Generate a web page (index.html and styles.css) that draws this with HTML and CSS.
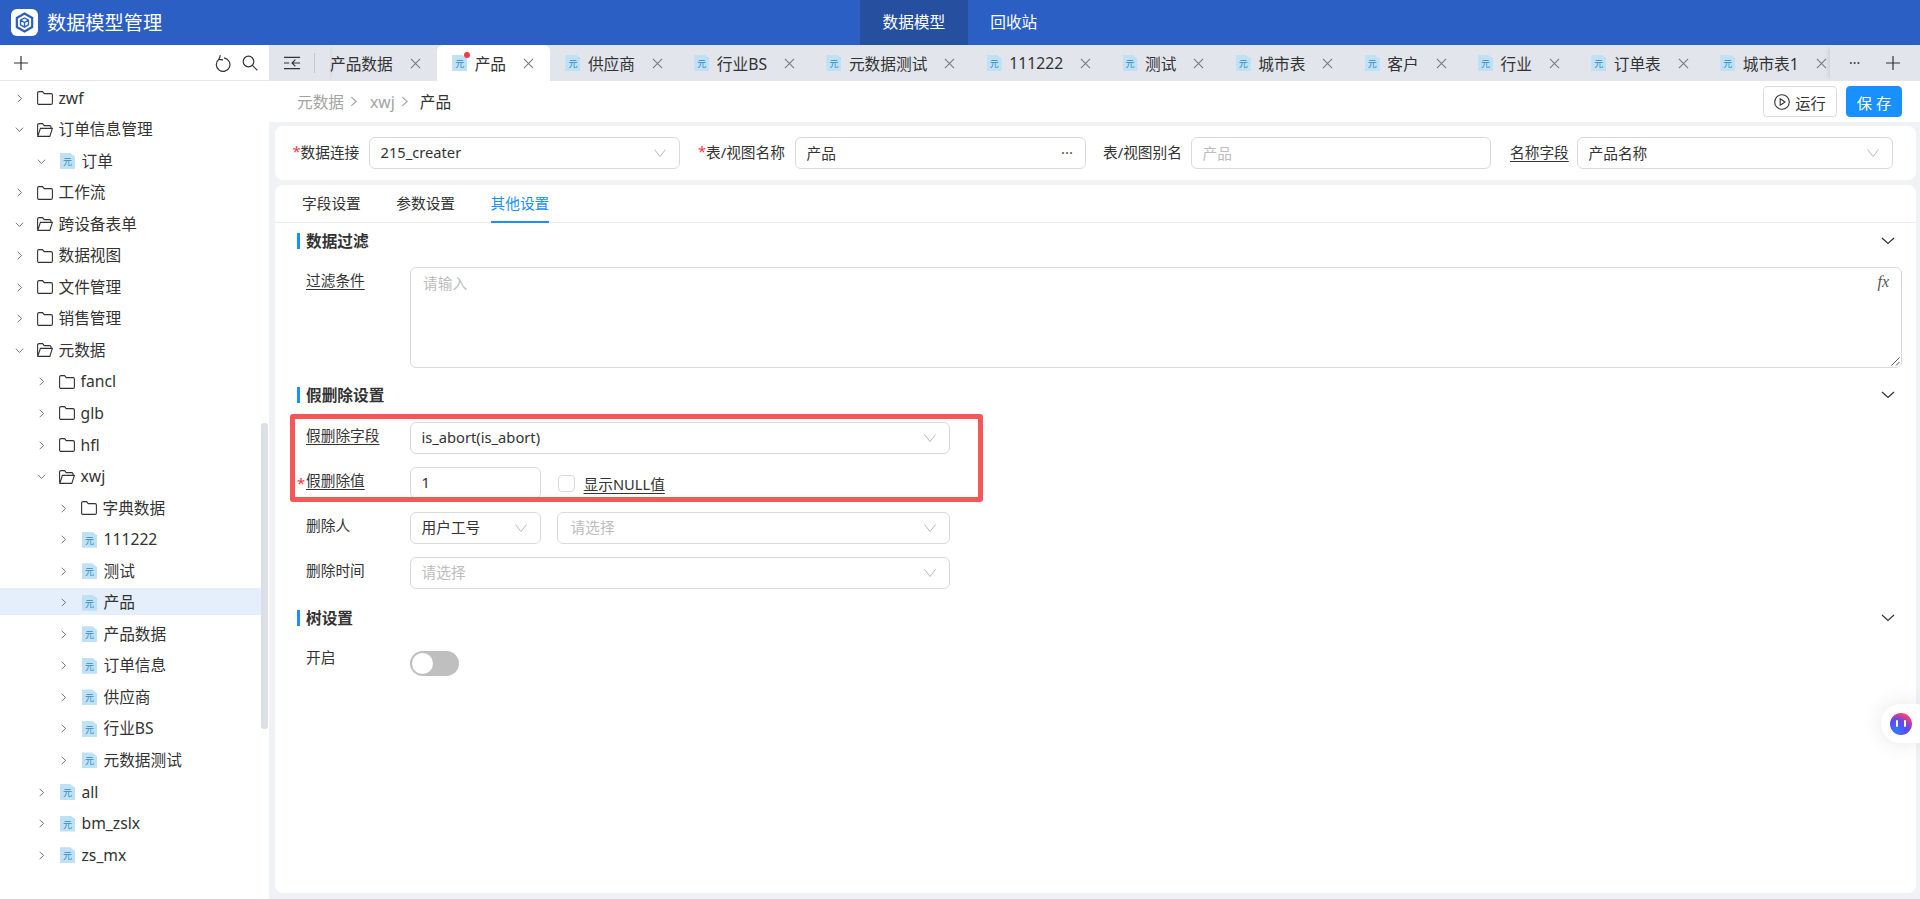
FILE: index.html
```html
<!DOCTYPE html>
<html lang="zh-CN">
<head>
<meta charset="utf-8">
<title>数据模型管理</title>
<link rel="stylesheet" href="styles.css">
</head>
<body>
<svg class="defs" aria-hidden="true">
  <symbol id="i-chev-r" viewBox="0 0 10 10"><path d="M3 1l4.400 4L3 9" fill="none" stroke="currentColor" stroke-width="1"/></symbol>
  <symbol id="i-chev-d" viewBox="0 0 14 14"><path d="M1.500 3.500L7 10.500l5.500-7" fill="none" stroke="currentColor" stroke-width="1"/></symbol>
  <symbol id="i-chev-open" viewBox="0 0 10 10"><path d="M1 3l4 4.200L9 3" fill="none" stroke="currentColor" stroke-width="1"/></symbol>
  <symbol id="i-chev-sec" viewBox="0 0 14 10"><path d="M1 2l6 5.500L13 2" fill="none" stroke="currentColor" stroke-width="1.200"/></symbol>
  <symbol id="i-folder" viewBox="0 0 16 14"><path d="M.6 12V2A1.400 1.400 0 0 1 2 .6h3.600l1.600 2H14A1.400 1.400 0 0 1 15.400 4v8a1.400 1.400 0 0 1-1.400 1.400H2A1.400 1.400 0 0 1 .6 12z" fill="none" stroke="#333" stroke-width="1.100"/></symbol>
  <symbol id="i-folder-open" viewBox="0 0 16 14"><path d="M.6 12.600V2A1.400 1.400 0 0 1 2 .6h3.600l1.600 2H12.600A1.400 1.400 0 0 1 14 4v1.400M.8 13.400H12.800L15.400 5.400H3.400L.8 13.400z" fill="none" stroke="#333" stroke-width="1.100"/></symbol>
  <symbol id="i-close" viewBox="0 0 12 12"><path d="M1 1l10 10M11 1L1 11" fill="none" stroke="currentColor" stroke-width="1.100"/></symbol>
</svg>

<header class="topbar">
  <div class="brand">
    <span class="logo">
      <svg viewBox="0 0 20 20" width="21" height="21"><path d="M10 1.500l7.300 4.200v8.600L10 18.500l-7.300-4.200V5.700z" fill="none" stroke="#2c5fc3" stroke-width="2.100"/><path d="M6.200 7.800L10 5.700l3.800 2.100v4.400L10 14.400l-3.800-2.200zM6.200 7.800L10 10l3.800-2.200M10 10v4.400" fill="none" stroke="#2c5fc3" stroke-width="1.300"/></svg>
    </span>
    <span class="brand-name">数据模型管理</span>
  </div>
  <nav class="topnav">
    <a class="topnav-item is-active">数据模型</a>
    <a class="topnav-item">回收站</a>
  </nav>
</header>

<div class="layout">
  <aside class="sidebar">
    <div class="side-tools">
      <svg class="plus" viewBox="0 0 14 14" width="14" height="14"><path d="M7 0v14M0 7h14" stroke="#333" stroke-width="1.200"/></svg>
      <span class="side-tools-right">
        <svg viewBox="0 0 16 18" width="16" height="18"><path d="M3.900 5.300A6.800 6.800 0 1 0 9 3.900" fill="none" stroke="#333" stroke-width="1.200"/><path d="M5.400 1.200L3.900 5.400l4.200.4" fill="none" stroke="#333" stroke-width="1.200"/></svg>
        <svg viewBox="0 0 16 16" width="16" height="16"><circle cx="6.500" cy="6.500" r="5.300" fill="none" stroke="#333" stroke-width="1.200"/><path d="M10.400 10.400l5 5" stroke="#333" stroke-width="1.200"/></svg>
      </span>
    </div>
    <div class="tree">
      <div class="row"><svg class="chev"><use href="#i-chev-r"/></svg><svg class="fold"><use href="#i-folder"/></svg><span>zwf</span></div>
      <div class="row"><svg class="chev"><use href="#i-chev-open"/></svg><svg class="fold"><use href="#i-folder-open"/></svg><span>订单信息管理</span></div>
      <div class="row l1"><svg class="chev"><use href="#i-chev-open"/></svg><i class="doc">元</i><span>订单</span></div>
      <div class="row"><svg class="chev"><use href="#i-chev-r"/></svg><svg class="fold"><use href="#i-folder"/></svg><span>工作流</span></div>
      <div class="row"><svg class="chev"><use href="#i-chev-open"/></svg><svg class="fold"><use href="#i-folder-open"/></svg><span>跨设备表单</span></div>
      <div class="row"><svg class="chev"><use href="#i-chev-r"/></svg><svg class="fold"><use href="#i-folder"/></svg><span>数据视图</span></div>
      <div class="row"><svg class="chev"><use href="#i-chev-r"/></svg><svg class="fold"><use href="#i-folder"/></svg><span>文件管理</span></div>
      <div class="row"><svg class="chev"><use href="#i-chev-r"/></svg><svg class="fold"><use href="#i-folder"/></svg><span>销售管理</span></div>
      <div class="row"><svg class="chev"><use href="#i-chev-open"/></svg><svg class="fold"><use href="#i-folder-open"/></svg><span>元数据</span></div>
      <div class="row l1"><svg class="chev"><use href="#i-chev-r"/></svg><svg class="fold"><use href="#i-folder"/></svg><span>fancl</span></div>
      <div class="row l1"><svg class="chev"><use href="#i-chev-r"/></svg><svg class="fold"><use href="#i-folder"/></svg><span>glb</span></div>
      <div class="row l1"><svg class="chev"><use href="#i-chev-r"/></svg><svg class="fold"><use href="#i-folder"/></svg><span>hfl</span></div>
      <div class="row l1"><svg class="chev"><use href="#i-chev-open"/></svg><svg class="fold"><use href="#i-folder-open"/></svg><span>xwj</span></div>
      <div class="row l2"><svg class="chev"><use href="#i-chev-r"/></svg><svg class="fold"><use href="#i-folder"/></svg><span>字典数据</span></div>
      <div class="row l2"><svg class="chev"><use href="#i-chev-r"/></svg><i class="doc">元</i><span>111222</span></div>
      <div class="row l2"><svg class="chev"><use href="#i-chev-r"/></svg><i class="doc">元</i><span>测试</span></div>
      <div class="row l2 is-selected"><svg class="chev"><use href="#i-chev-r"/></svg><i class="doc">元</i><span>产品</span></div>
      <div class="row l2"><svg class="chev"><use href="#i-chev-r"/></svg><i class="doc">元</i><span>产品数据</span></div>
      <div class="row l2"><svg class="chev"><use href="#i-chev-r"/></svg><i class="doc">元</i><span>订单信息</span></div>
      <div class="row l2"><svg class="chev"><use href="#i-chev-r"/></svg><i class="doc">元</i><span>供应商</span></div>
      <div class="row l2"><svg class="chev"><use href="#i-chev-r"/></svg><i class="doc">元</i><span>行业BS</span></div>
      <div class="row l2"><svg class="chev"><use href="#i-chev-r"/></svg><i class="doc">元</i><span>元数据测试</span></div>
      <div class="row l1"><svg class="chev"><use href="#i-chev-r"/></svg><i class="doc">元</i><span>all</span></div>
      <div class="row l1"><svg class="chev"><use href="#i-chev-r"/></svg><i class="doc">元</i><span>bm_zslx</span></div>
      <div class="row l1"><svg class="chev"><use href="#i-chev-r"/></svg><i class="doc">元</i><span>zs_mx</span></div>
    </div>
    <div class="side-scroll"></div>
  </aside>

  <main class="main">
    <div class="tabbar">
      <div class="tab-tools">
        <svg viewBox="0 0 18 14" width="17" height="14"><path d="M0 1h17M0 13h17M0 7h5.500" stroke="#333" stroke-width="1.200" fill="none"/><path d="M12 3.500L8.500 7l3.500 3.500M8.500 7H17" stroke="#333" stroke-width="1.200" fill="none"/></svg>
        <span class="tab-sep"></span>
      </div>
      <div class="tabs">
        <div class="tab tab-first"><span>产品数据</span><svg class="x"><use href="#i-close"/></svg></div>
        <div class="tab is-active"><span class="doc-wrap"><i class="doc">元</i><b class="dot"></b></span><span>产品</span><svg class="x"><use href="#i-close"/></svg></div>
        <div class="tab"><i class="doc">元</i><span>供应商</span><svg class="x"><use href="#i-close"/></svg></div>
        <div class="tab"><i class="doc">元</i><span>行业BS</span><svg class="x"><use href="#i-close"/></svg></div>
        <div class="tab"><i class="doc">元</i><span>元数据测试</span><svg class="x"><use href="#i-close"/></svg></div>
        <div class="tab"><i class="doc">元</i><span>111222</span><svg class="x"><use href="#i-close"/></svg></div>
        <div class="tab"><i class="doc">元</i><span>测试</span><svg class="x"><use href="#i-close"/></svg></div>
        <div class="tab"><i class="doc">元</i><span>城市表</span><svg class="x"><use href="#i-close"/></svg></div>
        <div class="tab"><i class="doc">元</i><span>客户</span><svg class="x"><use href="#i-close"/></svg></div>
        <div class="tab"><i class="doc">元</i><span>行业</span><svg class="x"><use href="#i-close"/></svg></div>
        <div class="tab"><i class="doc">元</i><span>订单表</span><svg class="x"><use href="#i-close"/></svg></div>
        <div class="tab"><i class="doc">元</i><span>城市表1</span><svg class="x"><use href="#i-close"/></svg></div>
      </div>
      <div class="tab-actions">
        <span class="more">···</span>
        <svg viewBox="0 0 14 14" width="14" height="14"><path d="M7 0v14M0 7h14" stroke="#333" stroke-width="1.200"/></svg>
      </div>
    </div>

    <div class="crumbbar">
      <div class="crumbs">
        <span class="crumb">元数据</span><svg class="crumb-sep"><use href="#i-chev-r"/></svg>
        <span class="crumb">xwj</span><svg class="crumb-sep"><use href="#i-chev-r"/></svg>
        <span class="crumb-now">产品</span>
      </div>
      <div class="actions">
        <button class="btn"><svg viewBox="0 0 16 16" width="16" height="16"><circle cx="8" cy="8" r="7.300" fill="none" stroke="#333" stroke-width="1.100"/><path d="M6.200 4.800L11 8l-4.800 3.200z" fill="none" stroke="#333" stroke-width="1.100"/></svg>运行</button>
        <button class="btn btn-primary">保 存</button>
      </div>
    </div>

    <section class="card basics">
      <label class="lbl w76"><em class="star">*</em>数据连接</label>
      <div class="select w311"><span>215_creater</span><svg class="arrow"><use href="#i-chev-d"/></svg></div>
      <label class="lbl w97 ml18"><em class="star">*</em>表/视图名称</label>
      <div class="select w291"><span>产品</span><span class="dots">···</span></div>
      <label class="lbl w88 ml17">表/视图别名</label>
      <div class="select w300"><span class="ph">产品</span></div>
      <label class="lbl w67 ml19"><u>名称字段</u></label>
      <div class="select w316"><span>产品名称</span><svg class="arrow"><use href="#i-chev-d"/></svg></div>
    </section>

    <section class="card panel">
      <div class="subtabs">
        <span class="subtab">字段设置</span>
        <span class="subtab">参数设置</span>
        <span class="subtab is-active">其他设置</span>
      </div>

      <div class="sec-title sec-1"><span class="sec-name">数据过滤</span><svg class="sec-chev"><use href="#i-chev-sec"/></svg></div>
      <div class="frow frow-first">
        <span class="flabel"><u>过滤条件</u></span>
        <div class="textarea">
          <span class="ph">请输入</span>
          <span class="fx">fx</span>
          <svg class="grip" viewBox="0 0 10 10" width="10" height="10"><path d="M9.500 1.500l-8 8M9.500 6l-3.500 3.500" stroke="#555" stroke-width="1" fill="none"/></svg>
        </div>
      </div>

      <div class="sec-title sec-2"><span class="sec-name">假删除设置</span><svg class="sec-chev"><use href="#i-chev-sec"/></svg></div>
      <div class="highlight">
        <div class="frow">
          <span class="flabel"><u>假删除字段</u></span>
          <div class="select w540"><span>is_abort(is_abort)</span><svg class="arrow"><use href="#i-chev-d"/></svg></div>
        </div>
        <div class="frow">
          <span class="flabel"><em class="star star-abs">*</em><u>假删除值</u></span>
          <div class="select w131"><span>1</span></div>
          <span class="check"></span>
          <span class="check-label"><u>显示NULL值</u></span>
        </div>
      </div>
      <div class="frow">
        <span class="flabel">删除人</span>
        <div class="select w131"><span>用户工号</span><svg class="arrow"><use href="#i-chev-d"/></svg></div>
        <div class="select w392"><span class="ph">请选择</span><svg class="arrow"><use href="#i-chev-d"/></svg></div>
      </div>
      <div class="frow">
        <span class="flabel">删除时间</span>
        <div class="select w540"><span class="ph">请选择</span><svg class="arrow"><use href="#i-chev-d"/></svg></div>
      </div>

      <div class="sec-title sec-3"><span class="sec-name">树设置</span><svg class="sec-chev"><use href="#i-chev-sec"/></svg></div>
      <div class="frow frow-switch">
        <span class="flabel">开启</span>
        <span class="switch"><span class="knob"></span></span>
      </div>
    </section>
  </main>
</div>

<div class="assistant"><span class="orb"><i></i><i></i></span></div>
</body>
</html>
```

FILE: styles.css
```css
*, *::before, *::after { box-sizing: border-box; }
html, body { margin: 0; height: 100%; }
body {
  display: flex;
  flex-direction: column;
  height: 100vh;
  overflow: hidden;
  font-family: "Noto Sans", "Noto Sans CJK SC", sans-serif;
  font-size: 14.7px;
  color: #333;
  background: #f0f2f6;
  position: relative;
}
.defs { position: absolute; width: 0; height: 0; }
em, i { font-style: normal; }
u { text-underline-offset: 3px; text-decoration-thickness: 1px; }

/* top bar */
.topbar { height: 45px; flex: none; display: flex; background: #2c5fc3; color: #fff; }
.brand { flex: 0 0 860px; display: flex; align-items: center; padding-left: 11px; }
.logo { width: 27px; height: 27px; background: #fff; border-radius: 6px; display: flex; align-items: center; justify-content: center; }
.brand-name { margin-left: 9px; font-size: 19.2px; line-height: 27px; }
.topnav { display: flex; }
.topnav-item { padding: 0 22.5px; line-height: 45px; text-align: center; font-size: 15.7px; }
.topnav-item.is-active { background: #26509f; }

.layout { flex: 1; min-height: 0; display: flex; }

/* sidebar */
.sidebar { width: 269px; flex: none; background: #fff; position: relative; overflow: hidden; }
.side-tools { height: 36px; border-bottom: 1px solid #e8e8e8; display: flex; align-items: center; justify-content: space-between; padding: 0 11px 0 14px; }
.side-tools-right { display: flex; align-items: center; gap: 11px; }
.plus { display: block; }
.tree { padding-top: 2.5px; }
.row { height: 27px; margin-bottom: 4.55px; display: flex; align-items: center; padding: 2px 0 0 15px; width: 261px; font-size: 15.7px; line-height: 25px; color: #333; white-space: nowrap; }
.row.l1 { padding-left: 37px; }
.row.l2 { padding-left: 59px; }
.row.is-selected { background: #e5effc; }
.chev { width: 9px; height: 9px; color: #666; flex: none; margin-right: 13px; }
.fold { width: 16px; height: 14px; flex: none; margin-right: 5.5px; }
.row .doc { margin-right: 6.5px; margin-left: 1px; }
.doc {
  position: relative;
  display: inline-block;
  flex: none;
  width: 15px;
  height: 16px;
  background: linear-gradient(225deg, #8cc7ea 3px, #bfe1f5 3.1px);
  clip-path: polygon(0 0, 68% 0, 100% 25%, 100% 100%, 0 100%);
  color: #2f8ac4;
  font-size: 9px;
  line-height: 17px;
  text-align: center;
}
.side-scroll { position: absolute; left: 261px; top: 378px; width: 7px; height: 306px; background: #dcdfe5; border-radius: 3px; }

/* main */
.main { flex: 1; min-width: 0; display: flex; flex-direction: column; }
.tabbar { height: 36px; flex: none; display: flex; background: #e2e5ec; }
.tab-tools { width: 61px; flex: none; display: flex; align-items: center; padding-left: 15px; gap: 13px; position: relative; z-index: 1; box-shadow: 3px 0 4px -2px rgba(0,0,0,.06); background: #e2e5ec; }
.tab-sep { width: 1px; height: 20px; background: #c4c7ce; }
.tabs { flex: 1; min-width: 0; display: flex; overflow: hidden; }
.tab { flex: none; height: 36px; display: flex; align-items: center; padding: 0 13.9px 0 15.5px; font-size: 15.7px; white-space: nowrap; position: relative; }
.tab .doc, .tab .doc-wrap { margin-right: 7.5px; }
.tab .doc-wrap .doc { margin-right: 0; }
.tab-first { padding-left: 0; }
.tab.is-active { background: #fff; border-radius: 6px 6px 0 0; }
.tab .x { width: 11px; height: 11px; color: #777; margin-left: 17px; margin-right: 2px; }
.doc-wrap { position: relative; display: flex; flex: none; }
.dot { position: absolute; top: -3px; right: -3px; width: 6px; height: 6px; border-radius: 50%; background: #f5384a; }
.tab-actions { width: 90px; flex: none; display: flex; align-items: center; justify-content: space-between; padding: 0 20px 0 19px; box-shadow: -4px 0 5px -3px rgba(0,0,0,.12); background: #e2e5ec; }
.more { font-size: 14px; line-height: 20px; }

.crumbbar { height: 41px; flex: none; background: #fff; display: flex; align-items: center; justify-content: space-between; padding: 0 18px 0 28px; }
.crumbs { display: flex; align-items: center; font-size: 15.7px; }
.crumb { color: #a3a3a3; }
.crumb-sep { width: 11px; height: 13px; color: #a3a3a3; margin: 0 11px 0 4px; }
.crumb-now { color: #333; margin-left: -1px; }
.actions { display: flex; gap: 9px; }
.btn { height: 31px; width: 74px; display: flex; align-items: center; justify-content: center; gap: 5px; border: 1px solid #dcdcdc; background: #fff; border-radius: 4px; font: inherit; font-size: 15.3px; color: #333; padding: 0; }
.btn-primary { width: 56px; background: #1890ff; border-color: #1890ff; color: #fff; }

.card { background: #fff; border-radius: 8px; margin: 0 4px 0 6px; }
.basics { margin-top: 4px; height: 54px; flex: none; display: flex; align-items: center; padding-left: 17.5px; }
.panel { margin-top: 5px; margin-bottom: 6px; flex: 1; min-height: 0; position: relative; }

.lbl { flex: none; display: flex; align-items: center; height: 32px; margin-top: -4px; white-space: nowrap; }
.star { color: #f5384a; width: 8px; flex: none; line-height: 1; }
.w76 { width: 76.5px; }
.w97 { width: 97px; }
.w88 { width: 88px; }
.w67 { width: 67px; }
.ml18 { margin-left: 18px; }
.ml17 { margin-left: 17px; }
.ml19 { margin-left: 19px; }

.select { flex: none; height: 32px; display: flex; align-items: center; justify-content: space-between; border: 1px solid #dadada; border-radius: 6px; padding: 0 12px 2px 10.5px; background: #fff; white-space: nowrap; }
.select .arrow { margin-bottom: -2px; }
.w311 { width: 311px; }
.w291 { width: 291px; }
.w300 { width: 300px; }
.w316 { width: 316px; }
.w540 { width: 540px; }
.w131 { width: 131px; }
.w392 { width: 393px; margin-left: 16px; padding-left: 12.5px; }
.arrow { width: 14px; height: 14px; color: #b8b8b8; flex: none; }
.dots { color: #555; font-size: 15px; line-height: 1; }
.ph { color: #bdbdbd; }

.subtabs { height: 38px; display: flex; gap: 35.5px; padding-left: 27px; border-bottom: 1px solid #ececec; }
.subtab { line-height: 36px; height: 38px; }
.subtab.is-active { color: #1890ff; border-bottom: 2px solid #1890ff; }

.sec-title { height: 16px; display: flex; align-items: center; justify-content: space-between; padding: 0 21px 0 31px; position: relative; }
.sec-title::before { content: ""; position: absolute; left: 22px; top: 0; width: 3px; height: 16px; background: #1890ff; }
.sec-name { font-size: 15.7px; font-weight: 700; color: #333; line-height: 15px; }
.sec-chev { width: 14px; height: 10px; color: #333; }
.sec-1 { margin-top: 10px; }
.sec-2 { margin-top: 19px; margin-bottom: 18.5px; }
.sec-3 { margin-top: 21.5px; }

.frow { display: flex; align-items: center; padding-left: 31px; height: 32px; margin-bottom: 13px; }
.frow-first { height: 101px; margin-top: 18px; margin-bottom: 0; align-items: flex-start; }
.frow-switch { margin-top: 25px; height: 25px; align-items: flex-start; }
.frow-switch .flabel { margin-top: -7px; }
.flabel { flex: none; width: 104px; position: relative; line-height: 27px; align-self: flex-start; }
.star-abs { position: absolute; left: -9px; top: 9px; }
.textarea { position: relative; width: 1492px; height: 101px; border: 1px solid #dadada; border-radius: 6px; padding: 3px 12px; line-height: 24px; }
.fx { position: absolute; right: 12px; top: 2px; font-family: "Liberation Serif", serif; font-style: italic; font-size: 16px; color: #555; }
.grip { position: absolute; right: 1px; bottom: 1px; }
.highlight { position: relative; }
.highlight::after { content: ""; position: absolute; left: 15px; top: -7.5px; width: 693px; height: 88px; border: 5px solid #f55656; border-radius: 3px; pointer-events: none; }
.check { width: 17px; height: 17px; border: 1px solid #dadada; border-radius: 4px; margin-left: 17px; margin-top: 2px; }
.check-label { margin-left: 8.5px; margin-top: 2px; }
.switch { display: block; width: 49px; height: 25px; border-radius: 13px; background: #bfbfbf; padding: 2px; }
.knob { display: block; width: 21px; height: 21px; border-radius: 50%; background: #fff; }

.assistant { position: absolute; right: 0; top: 704px; width: 39px; height: 39px; background: #fff; border-radius: 20px 0 0 20px; box-shadow: 0 0 22px rgba(0,0,0,.1); display: flex; align-items: center; padding-left: 9px; }
.orb { width: 22px; height: 22px; border-radius: 50%; background: radial-gradient(circle at 25% 85%, #2f7bff 0, #5a4cf0 45%, transparent 75%), linear-gradient(20deg, #5a3ff0, #d93a9a 60%, #ff4d4d); display: flex; align-items: center; justify-content: center; gap: 6px; filter: blur(.4px); }
.orb i { width: 2px; height: 7px; background: #fff; border-radius: 1px; }
```
